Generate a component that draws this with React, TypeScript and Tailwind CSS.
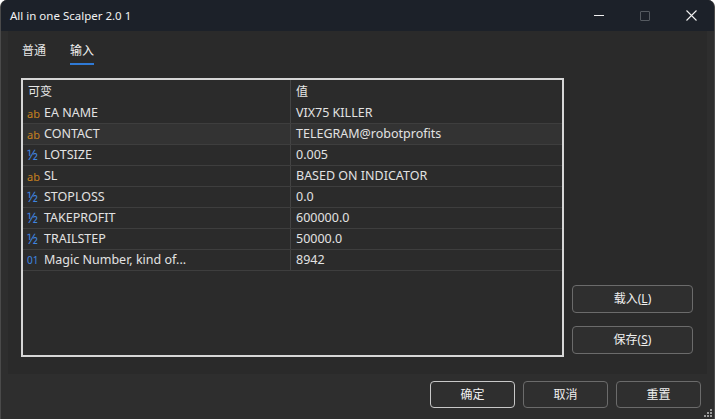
import React from 'react'

type Kind = 'str' | 'dbl' | 'int'

const rows: { kind: Kind; name: string; value: string }[] = [
  { kind: 'str', name: 'EA NAME', value: 'VIX75 KILLER' },
  { kind: 'str', name: 'CONTACT', value: 'TELEGRAM@robotprofits' },
  { kind: 'dbl', name: 'LOTSIZE', value: '0.005' },
  { kind: 'str', name: 'SL', value: 'BASED ON INDICATOR' },
  { kind: 'dbl', name: 'STOPLOSS', value: '0.0' },
  { kind: 'dbl', name: 'TAKEPROFIT', value: '600000.0' },
  { kind: 'dbl', name: 'TRAILSTEP', value: '50000.0' },
  { kind: 'int', name: 'Magic Number, kind of...', value: '8942' },
]

function TypeIcon({ kind }: { kind: Kind }) {
  if (kind === 'str') return <span className="w-[17px] text-[11px] leading-none text-[#c7801f]">ab</span>
  if (kind === 'int') return <span className="w-[17px] text-[10px] leading-none text-[#3f86e0]">01</span>
  return <span className="w-[17px] text-[14px] leading-none text-[#3f86e0]">½</span>
}

function Btn({ children, focused }: { children: React.ReactNode; focused?: boolean }) {
  return (
    <button
      className={
        focused
          ? 'h-[27px] w-[85px] rounded-[4px] border border-[#c8c8c8] bg-[#2f2f2f] text-[12px] text-[#f0f0f0]'
          : 'h-[27px] w-[85px] rounded-[4px] border border-[#6b6b6b] bg-[#2f2f2f] text-[12px] text-[#f0f0f0]'
      }
    >
      {children}
    </button>
  )
}

export default function App() {
  return (
    <div
      className="flex h-[419px] w-[715px] flex-col overflow-hidden rounded-t-[7px] border-x border-[#4a4a4a] bg-[#2e2e2e] text-[#e6e6e6]"
      style={{ fontFamily: '"Noto Sans", "Noto Sans CJK SC", sans-serif' }}
    >
      {/* title bar */}
      <div className="flex h-[31px] shrink-0 items-center justify-between bg-[#1c2129]">
        <div className="pl-[9px] text-[11.5px] text-[#f2f2f2]">All in one Scalper 2.0 1</div>
        <div className="flex h-full items-center">
          <div className="flex w-[46px] justify-center">
            <div className="h-px w-[10px] bg-[#f0f0f0]" />
          </div>
          <div className="flex w-[46px] justify-center">
            <div className="h-[10px] w-[10px] rounded-[1px] border border-[#555a60]" />
          </div>
          <div className="flex w-[46px] justify-center">
            <svg width="11" height="11" viewBox="0 0 11 11" stroke="#f0f0f0" strokeWidth="1.1">
              <path d="M0.5 0.5L10.5 10.5M10.5 0.5L0.5 10.5" />
            </svg>
          </div>
        </div>
      </div>

      {/* tab panel */}
      <div className="mx-[7px] flex h-[343px] shrink-0 flex-col bg-[#2a2a2a]">
        <div className="flex gap-[24px] pl-[14px] pt-[11px] text-[12px]">
          <div className="pb-[5px] text-[#e6e6e6]">普通</div>
          <div className="border-b-2 border-[#2f7ad6] pb-[3px] text-[#f2f2f2]">输入</div>
        </div>

        <div className="mt-[13px] flex">
          <div className="ml-[13px] h-[279px] w-[543px] border-2 border-[#d6d6d6] bg-[#2b2b2b] text-[12.5px]">
            <div className="flex h-[23px] items-center text-[12px]">
              <div className="h-full w-[268px] border-r border-[#444444] pl-[5px] leading-[23px]">可变</div>
              <div className="pl-[5px]">值</div>
            </div>
            {rows.map((r) => (
              <div
                key={r.name}
                className={
                  r.name === 'CONTACT'
                    ? 'flex h-[21px] items-center border-b border-[#3e3e3e] bg-[#333333]'
                    : 'flex h-[21px] items-center border-b border-[#3e3e3e]'
                }
              >
                <div className="flex h-full w-[268px] items-center border-r border-[#444444] pl-[4px]">
                  <TypeIcon kind={r.kind} />
                  <span className="text-[#e2e2e2]">{r.name}</span>
                </div>
                <div className="pl-[5px] text-[#e2e2e2]">{r.value}</div>
              </div>
            ))}
          </div>

          <div className="ml-[8px] flex flex-col gap-[13px] pt-[207px]">
            <button className="h-[28px] w-[121px] rounded-[4px] border border-[#6b6b6b] bg-[#2f2f2f] text-[12px] text-[#f0f0f0]">
              载入(<span className="underline">L</span>)
            </button>
            <button className="h-[28px] w-[121px] rounded-[4px] border border-[#6b6b6b] bg-[#2f2f2f] text-[12px] text-[#f0f0f0]">
              保存(<span className="underline">S</span>)
            </button>
          </div>
        </div>
      </div>

      {/* bottom bar */}
      <div className="relative flex flex-1 items-start justify-end gap-[8px] pr-[13px] pt-[7px]">
        <Btn focused>确定</Btn>
        <Btn>取消</Btn>
        <Btn>重置</Btn>
        <div className="absolute bottom-[2px] right-[2px] grid grid-cols-3 gap-[1px]">
          <div className="h-[2px] w-[2px]" />
          <div className="h-[2px] w-[2px]" />
          <div className="h-[2px] w-[2px] bg-[#9a9a9a]" />
          <div className="h-[2px] w-[2px]" />
          <div className="h-[2px] w-[2px] bg-[#9a9a9a]" />
          <div className="h-[2px] w-[2px] bg-[#9a9a9a]" />
          <div className="h-[2px] w-[2px] bg-[#9a9a9a]" />
          <div className="h-[2px] w-[2px] bg-[#9a9a9a]" />
          <div className="h-[2px] w-[2px] bg-[#9a9a9a]" />
        </div>
      </div>
    </div>
  )
}
